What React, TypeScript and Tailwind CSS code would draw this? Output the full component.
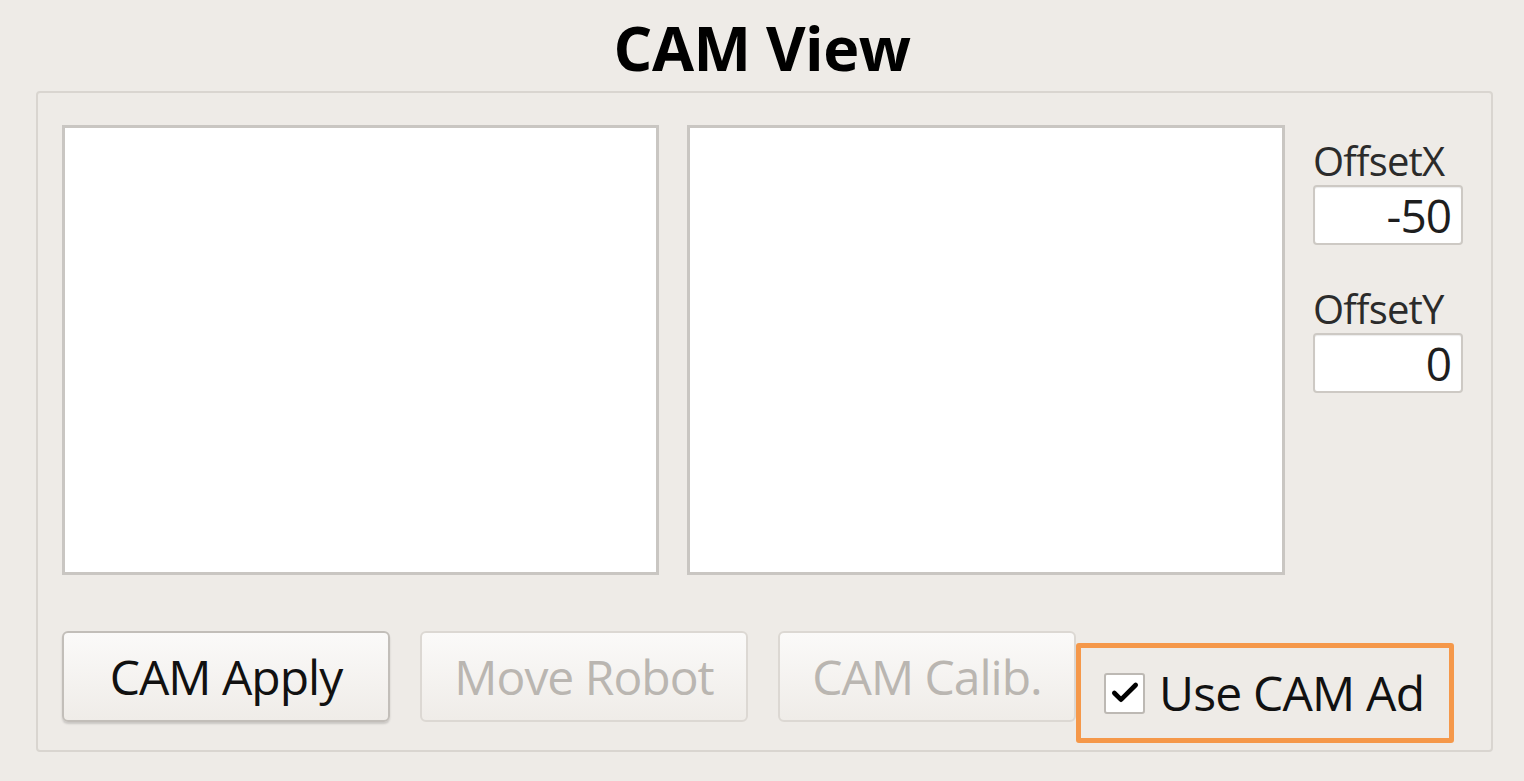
import { Check } from 'lucide-react'

const font = { fontFamily: '"Open Sans", "DejaVu Sans", sans-serif' }

function Field({ label, value }: { label: string; value: string }) {
  return (
    <div className="flex flex-col">
      <div className="text-[40px] leading-[36px] text-[#2b2b2b] tracking-[-0.8px]">{label}</div>
      <div className="mt-[6px] h-[60px] w-[150px] bg-white border-2 border-[#cdc9c4] rounded-[4px] shadow-[inset_0_1px_1px_rgba(0,0,0,0.08)] flex items-center justify-end pr-[10px] text-[46px] text-[#1e1e1e] tracking-[-1px]">
        {value}
      </div>
    </div>
  )
}

function Button({ label, disabled, w }: { label: string; disabled?: boolean; w: string }) {
  return (
    <button
      className={`${w} h-[91px] rounded-[6px] border-2 bg-gradient-to-b from-[#fbfaf9] to-[#efece8] text-[48px] tracking-[-1px] flex items-center justify-center ${
        disabled
          ? 'border-[#dcd8d3] text-[#bab6b1]'
          : 'border-[#c2beb9] text-[#111] shadow-[0_2px_2px_rgba(0,0,0,0.15)]'
      }`}
    >
      {label}
    </button>
  )
}

export default function App() {
  return (
    <div className="w-[1524px] h-[781px] bg-[#eeebe7] overflow-hidden" style={font}>
      {/* Title */}
      <div className="h-[91px] flex items-start justify-center pt-[8px]">
        <h1 className="text-[61px] leading-[80px] font-bold text-black tracking-[-0.5px]">CAM View</h1>
      </div>

      {/* Group box */}
      <div className="ml-[36px] w-[1457px] h-[661px] border-2 border-[#d9d5d0] rounded-[4px] pl-[24px] pt-[32px]">
        <div className="flex">
          <div className="w-[597px] h-[450px] bg-white border-[3px] border-[#c9c6c2]" />
          <div className="ml-[28px] w-[598px] h-[450px] bg-white border-[3px] border-[#c9c6c2]" />
          <div className="ml-[28px] pt-[18px] flex flex-col gap-[46px]">
            <Field label="OffsetX" value="-50" />
            <Field label="OffsetY" value="0" />
          </div>
        </div>

        <div className="flex items-start mt-[56px]">
          <Button label="CAM Apply" w="w-[328px]" />
          <div className="ml-[30px]">
            <Button label="Move Robot" disabled w="w-[328px]" />
          </div>
          <div className="ml-[30px]">
            <Button label="CAM Calib." disabled w="w-[298px]" />
          </div>
          <div className="mt-[12px] w-[378px] h-[100px] border-[5px] border-[#f5984a] rounded-[3px] flex items-center pl-[23px]">
            <div className="w-[41px] h-[41px] bg-white border-2 border-[#bdb9b4] rounded-[3px] flex items-center justify-center">
              <Check className="w-[32px] h-[32px] text-black" strokeWidth={3.5} />
            </div>
            <span className="ml-[14px] text-[48px] text-[#111] tracking-[-0.8px]">Use CAM Ad</span>
          </div>
        </div>
      </div>
    </div>
  )
}
